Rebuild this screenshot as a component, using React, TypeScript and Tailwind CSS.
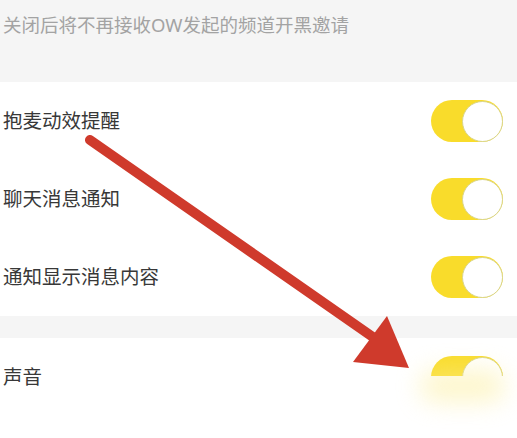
import React from "react";

const rows = ["抱麦动效提醒", "聊天消息通知", "通知显示消息内容"];

const Toggle = () => (
  <div className="w-[72px] h-[42px] rounded-full bg-[#f9dc2b] flex items-center justify-end">
    <div className="w-[41px] h-[41px] rounded-full bg-white border border-[#d9d58a]" />
  </div>
);

const Row = ({ label }: { label: string }) => (
  <div className="h-[78px] flex items-center justify-between pl-[3px] pr-[14px] bg-white">
    <span className="text-[19.5px] text-[#383838]">{label}</span>
    <Toggle />
  </div>
);

export default function App() {
  return (
    <div
      className="relative w-[517px] h-[438px] overflow-hidden bg-white"
      style={{ fontFamily: '"Noto Sans", "Noto Sans CJK SC", sans-serif' }}
    >
      <div className="h-[82px] bg-[#f5f5f5] pl-[3px] pt-[11px] text-[18.5px] text-[#a3a3a3]">
        关闭后将不再接收OW发起的频道开黑邀请
      </div>
      {rows.map((r) => (
        <Row key={r} label={r} />
      ))}
      <div className="h-[22px] bg-[#f5f5f5]" />
      <Row label="声音" />

      {/* watermark patch over bottom right */}
      <div className="absolute left-[365px] top-[376px] right-0 bottom-0 bg-white">
        <div className="absolute left-[55px] top-[-6px] w-[85px] h-[32px] rounded-full bg-[#fcee9a] opacity-50 blur-md" />
      </div>

      {/* red annotation arrow */}
      <svg className="absolute inset-0 pointer-events-none" width="517" height="438">
        <line x1="90" y1="140" x2="380" y2="342" stroke="#cf3a2c" strokeWidth="10" strokeLinecap="round" />
        <polygon points="387,316 353,362 409,368" fill="#cf3a2c" />
      </svg>
    </div>
  );
}
